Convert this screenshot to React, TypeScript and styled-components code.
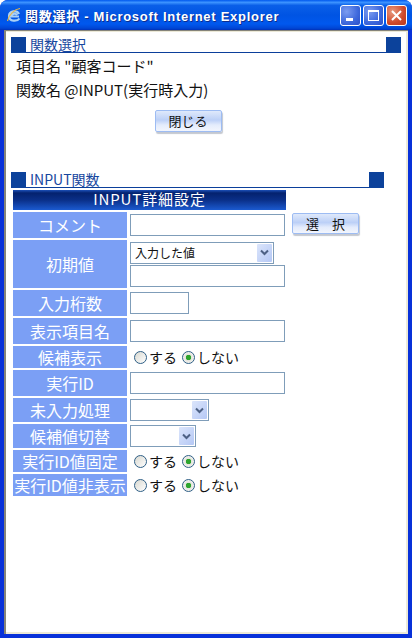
import styled, { createGlobalStyle } from "styled-components";

const GlobalStyle = createGlobalStyle`
  html, body {
    margin: 0;
    padding: 0;
    background: #fff;
  }
  * {
    box-sizing: border-box;
  }
`;

const jpFont = `"Noto Sans CJK JP", "Liberation Sans", sans-serif`;

const Win = styled.div`
  width: 412px;
  height: 638px;
  display: flex;
  flex-direction: column;
  overflow: hidden;
  background: #0831d9;
  border-radius: 8px 8px 0 0;
  font-family: ${jpFont};
`;

const TitleBar = styled.div`
  height: 30px;
  flex: none;
  display: flex;
  align-items: center;
  padding: 0 5px 0 6px;
  background: linear-gradient(
    to bottom,
    #0058ee 0%,
    #3c93ff 8%,
    #0a5fe8 18%,
    #0054e3 50%,
    #0058ee 80%,
    #0046d5 94%,
    #0031b8 100%
  );
`;

const TitleText = styled.div`
  flex: 1;
  margin-left: 3px;
  color: #fff;
  font-size: 13px;
  font-weight: 700;
  letter-spacing: 0.72px;
  white-space: nowrap;
  text-shadow: 1px 1px 0 #0f2d8c;
  font-family: "Liberation Sans", "Noto Sans CJK JP", sans-serif;
`;

const WinButtons = styled.div`
  display: flex;
  gap: 2px;
`;

const WinButton = styled.div<{ $close?: boolean }>`
  width: 21px;
  height: 21px;
  border: 1px solid #fff;
  border-radius: 3px;
  display: flex;
  align-items: center;
  justify-content: center;
  background: ${(p) =>
    p.$close
      ? "radial-gradient(circle at 30% 30%, #e89a80, #d0492a 60%, #b93a1c)"
      : "radial-gradient(circle at 30% 30%, #7c9cf0, #3d68dc 60%, #2c50c8)"};
`;

const Frame = styled.div`
  flex: 1;
  min-height: 0;
  margin: 0 4px 4px;
  padding: 1px 2px 2px 0;
  background: #ece9d8;
  border-left: 2px solid #85847a;
  border-top: 1px solid #85847a;
`;

const Client = styled.div`
  height: 100%;
  background: #fff;
  padding: 5px 0 0 5px;
  display: flex;
  flex-direction: column;
`;

const SectionHead = styled.div<{ $width: number }>`
  width: ${(p) => p.$width}px;
  height: 16px;
  flex: none;
  display: flex;
  align-items: stretch;
  border-bottom: 1px solid #0b3f9b;
  color: #17479e;
  font-size: 14px;
  line-height: 14px;
`;

const HeadSquare = styled.div`
  width: 15px;
  height: 16px;
  flex: none;
  background: #0c429b;
`;

const HeadLabel = styled.div`
  flex: 1;
  padding-left: 4px;
  white-space: nowrap;
`;

const InfoBlock = styled.div`
  padding: 1px 0 0 5px;
  color: #111;
  font-size: 15px;
  line-height: 24px;
  white-space: nowrap;
`;

const CloseRow = styled.div`
  width: 354px;
  display: flex;
  justify-content: center;
  margin-top: 8px;
  margin-bottom: 40px;
`;

const PillButton = styled.button`
  width: 67px;
  height: 22px;
  padding: 0;
  border: 1px solid #9dbcf3;
  border-radius: 2px;
  background: linear-gradient(to bottom, #dfe9fb 0%, #bcd0f7 45%, #e4ecfc 70%, #f2f5fd 100%);
  box-shadow: 1px 2px 1px #c4c8d0;
  color: #111;
  font-family: ${jpFont};
  font-size: 13px;
  line-height: 18px;
`;

const FormWrap = styled.div`
  margin: 2px 0 0 2px;
  position: relative;
  width: 346px;
`;

const TableHead = styled.div`
  width: 273px;
  height: 20px;
  margin-bottom: 2px;
  text-align: center;
  color: #fff;
  font-size: 15px;
  letter-spacing: 0.9px;
  line-height: 18px;
  background: linear-gradient(to bottom, #1c50b8 0%, #04226e 15%, #0a2f88 50%, #1b5ad0 100%);
`;

const Rows = styled.div`
  display: flex;
  flex-direction: column;
  gap: 2px;
`;

const Row = styled.div<{ $h: number }>`
  display: grid;
  grid-template-columns: 114px 1fr;
  column-gap: 3px;
  height: ${(p) => p.$h}px;
`;

const RowLabel = styled.div`
  background: #7b9ff5;
  color: #fff;
  display: flex;
  align-items: center;
  justify-content: center;
  font-size: 16px;
  line-height: 1;
  white-space: nowrap;
`;

const Field = styled.div`
  display: flex;
  flex-direction: column;
  justify-content: center;
  align-items: flex-start;
  gap: 1px;
`;

const TextInput = styled.input<{ $w: number }>`
  width: ${(p) => p.$w}px;
  height: 22px;
  padding: 0 2px;
  border: 1px solid #7f9db9;
  background: #fff;
  outline: none;
`;

const SelectBox = styled.div<{ $w: number }>`
  width: ${(p) => p.$w}px;
  height: 22px;
  padding: 1px 1px 1px 4px;
  border: 1px solid #7f9db9;
  background: #fff;
  display: flex;
  align-items: center;
  justify-content: space-between;
  font-size: 12px;
  color: #111;
`;

const SelectArrow = styled.div`
  width: 15px;
  height: 18px;
  flex: none;
  border-radius: 1px;
  background: linear-gradient(to bottom right, #dbe5fb, #b5c8f5);
  display: flex;
  align-items: center;
  justify-content: center;
`;

const RadioGroup = styled.div`
  display: flex;
  align-items: center;
  height: 100%;
  padding-left: 4px;
  font-size: 14px;
  line-height: 1;
  color: #111;
`;

const RadioItem = styled.div`
  display: flex;
  align-items: center;
  margin-right: 5px;
  white-space: nowrap;
`;

const RadioDot = styled.span<{ $on?: boolean }>`
  width: 13px;
  height: 13px;
  margin-right: 2px;
  border-radius: 50%;
  border: 1px solid #2f5f86;
  background: ${(p) =>
    p.$on
      ? "radial-gradient(circle, #2ea52e 0 2.5px, #e4e4dc 3px, #fff 100%)"
      : "linear-gradient(135deg, #d8d8d0, #fff)"};
`;

const SelectPick = styled(PillButton)`
  position: absolute;
  left: 279px;
  top: 23px;
  height: 21px;
`;

function Arrow() {
  return (
    <SelectArrow>
      <svg width="9" height="7" viewBox="0 0 9 7">
        <path d="M1 1.5 L4.5 5 L8 1.5" fill="none" stroke="#4d6185" strokeWidth="2" />
      </svg>
    </SelectArrow>
  );
}

function Choice() {
  return (
    <RadioGroup>
      <RadioItem>
        <RadioDot />
        する
      </RadioItem>
      <RadioItem>
        <RadioDot $on />
        しない
      </RadioItem>
    </RadioGroup>
  );
}

export default function App() {
  return (
    <>
      <GlobalStyle />
      <Win>
        <TitleBar>
          <svg width="16" height="16" viewBox="0 0 16 16">
            <path
              d="M13 9.5 H5 C5 6.5 10 6 11 8 M13.5 11.5 C11.5 14.5 3 15 3 9 C3 4 11 2.5 13 7"
              fill="none"
              stroke="#a9d0f5"
              strokeWidth="2.2"
            />
            <path d="M1.5 14 C3 7 9 2 14 1.5" fill="none" stroke="#e8b84a" strokeWidth="1.2" />
          </svg>
          <TitleText>関数選択 - Microsoft Internet Explorer</TitleText>
          <WinButtons>
            <WinButton>
              <svg width="13" height="13" viewBox="0 0 13 13">
                <rect x="2" y="9" width="7" height="3" fill="#fff" />
              </svg>
            </WinButton>
            <WinButton>
              <svg width="13" height="13" viewBox="0 0 13 13">
                <rect x="1.5" y="1.5" width="10" height="10" fill="none" stroke="#fff" />
                <rect x="1" y="1" width="11" height="2" fill="#fff" />
              </svg>
            </WinButton>
            <WinButton $close>
              <svg width="13" height="13" viewBox="0 0 13 13">
                <path d="M2 2 L11 11 M11 2 L2 11" stroke="#fff" strokeWidth="2" />
              </svg>
            </WinButton>
          </WinButtons>
        </TitleBar>
        <Frame>
          <Client>
            <SectionHead $width={390}>
              <HeadSquare />
              <HeadLabel>関数選択</HeadLabel>
              <HeadSquare />
            </SectionHead>
            <InfoBlock>
              <div>項目名 "顧客コード"</div>
              <div>関数名 @INPUT(実行時入力)</div>
            </InfoBlock>
            <CloseRow>
              <PillButton>閉じる</PillButton>
            </CloseRow>
            <SectionHead $width={373}>
              <HeadSquare />
              <HeadLabel>INPUT関数</HeadLabel>
              <HeadSquare />
            </SectionHead>
            <FormWrap>
              <TableHead>INPUT詳細設定</TableHead>
              <SelectPick>選　択</SelectPick>
              <Rows>
                <Row $h={26}>
                  <RowLabel>コメント</RowLabel>
                  <Field>
                    <TextInput $w={155} />
                  </Field>
                </Row>
                <Row $h={48}>
                  <RowLabel>初期値</RowLabel>
                  <Field>
                    <SelectBox $w={144}>
                      入力した値
                      <Arrow />
                    </SelectBox>
                    <TextInput $w={155} />
                  </Field>
                </Row>
                <Row $h={26}>
                  <RowLabel>入力桁数</RowLabel>
                  <Field>
                    <TextInput $w={59} />
                  </Field>
                </Row>
                <Row $h={26}>
                  <RowLabel>表示項目名</RowLabel>
                  <Field>
                    <TextInput $w={155} />
                  </Field>
                </Row>
                <Row $h={22}>
                  <RowLabel>候補表示</RowLabel>
                  <Choice />
                </Row>
                <Row $h={26}>
                  <RowLabel>実行ID</RowLabel>
                  <Field>
                    <TextInput $w={155} />
                  </Field>
                </Row>
                <Row $h={24}>
                  <RowLabel>未入力処理</RowLabel>
                  <Field>
                    <SelectBox $w={79}>
                      <span />
                      <Arrow />
                    </SelectBox>
                  </Field>
                </Row>
                <Row $h={24}>
                  <RowLabel>候補値切替</RowLabel>
                  <Field>
                    <SelectBox $w={66}>
                      <span />
                      <Arrow />
                    </SelectBox>
                  </Field>
                </Row>
                <Row $h={22}>
                  <RowLabel>実行ID値固定</RowLabel>
                  <Choice />
                </Row>
                <Row $h={22}>
                  <RowLabel>実行ID値非表示</RowLabel>
                  <Choice />
                </Row>
              </Rows>
            </FormWrap>
          </Client>
        </Frame>
      </Win>
    </>
  );
}
